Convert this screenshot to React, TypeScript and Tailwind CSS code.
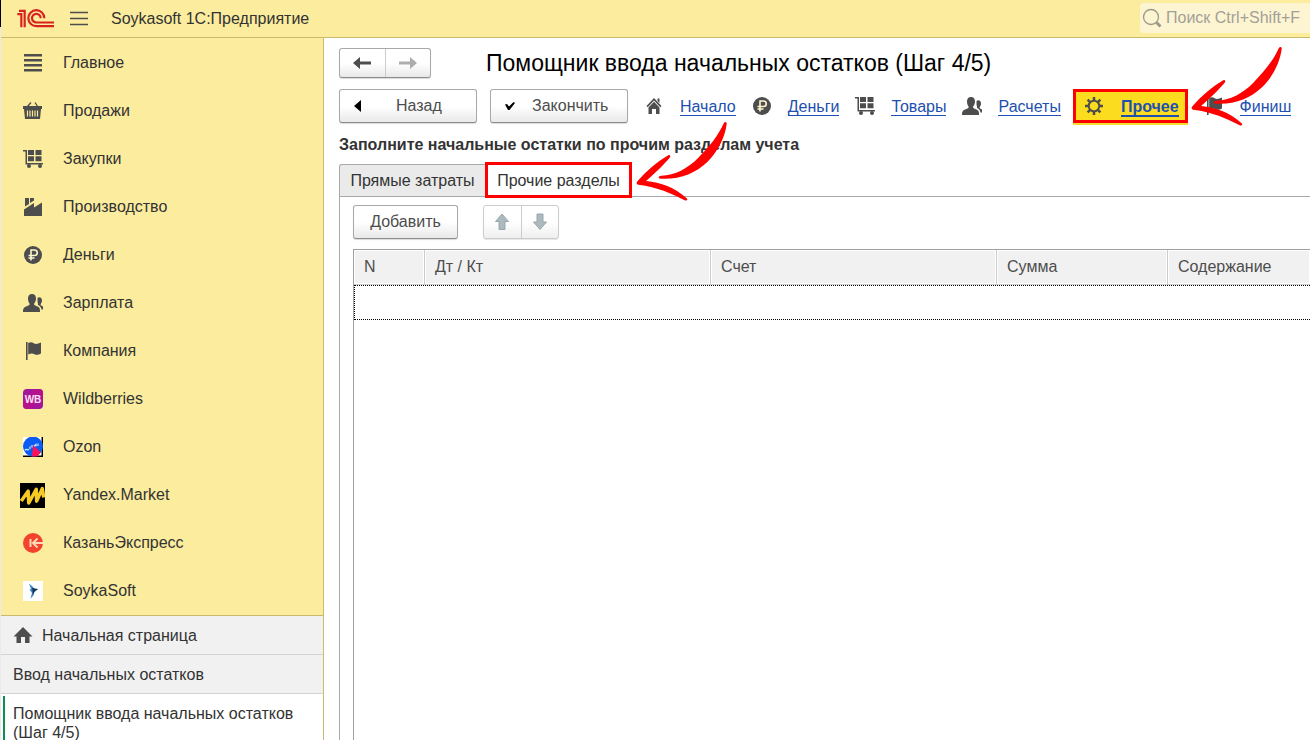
import type { ReactNode } from 'react'

const steelButton =
  'border border-[#a9a9a9] border-b-[#8c8c8c] bg-linear-to-b from-white from-50% to-[#e9e9e9] shadow-[0_1px_1px_rgba(0,0,0,0.15)] rounded-[3px]'

function Icon({ children, className = 'size-5' }: { children: ReactNode; className?: string }) {
  return (
    <svg viewBox="0 0 20 20" className={`shrink-0 fill-[#4d4d4d] ${className}`} aria-hidden="true">
      {children}
    </svg>
  )
}

function LinesIcon() {
  return (
    <Icon>
      <path d="M1 1h18v2.5H1zM1 6h18v2.5H1zM1 11h18v2.5H1zM1 16h18v2.5H1z" />
    </Icon>
  )
}

function BasketIcon() {
  return (
    <Icon>
      <path d="M4 6 8 1.500M15 6 12 1.500" stroke="#4d4d4d" strokeWidth="1.3" fill="none" />
      <path d="M0 5h19v3h-1l-1 10H2L1 8H0z" />
      <path d="M4.500 9.500v6M7 9.500v6M9.500 9.500v6M12 9.500v6M14.500 9.500v6" stroke="#fbec9e" strokeWidth="1.2" />
    </Icon>
  )
}

function CartIcon() {
  return (
    <Icon>
      <path d="M0 1h4v13h16v1.500H2.500V2.500H0z" />
      <path d="M5 1h6v5H5zM12.500 1h6v5h-6zM5 7.300h6v5H5zM12.500 7.300h6v5h-6z" />
      <circle cx="6" cy="17" r="2" />
      <circle cx="17" cy="17" r="2" />
    </Icon>
  )
}

function FactoryIcon() {
  return (
    <Icon>
      <path d="M1 19V12.500L11 6v4.500L19 5.500V19z" />
      <path d="M2 1h4v6L2 9.500zM7 1h4v2.500L7 6z" />
    </Icon>
  )
}

function RubleIcon() {
  return (
    <Icon>
      <circle cx="10" cy="10" r="9" />
      <path d="M8 15.500V5h3.500a2.700 2.700 0 0 1 0 5.500H5.500M5.500 13h6" fill="none" stroke="#fff6cf" strokeWidth="1.6" />
    </Icon>
  )
}

function PeopleIcon() {
  return (
    <Icon className="size-5 overflow-visible">
      <path d="M9 1c2.800 0 4 1.800 4 4.500 0 2-.8 3.800-1.800 4.800v1.700l4.300 2c1.300.7 1.500 2 1.500 5H0c0-3 .5-4.300 2-5l4.500-2v-1.700C5.500 9.300 5 7.500 5 5.500 5 2.800 6.200 1 9 1z" />
      <path d="M14.500 5c1-1.500 4.500-1.200 4.500 2.500 0 1.500-.6 2.800-1.300 3.500v1.200l2.300 1.300v3h-1.500c-.3-2.500-1.500-3.500-3.500-4.500v-1.500c-.8-1.300-.3-3.800-.5-5.500z" />
    </Icon>
  )
}

function FlagIcon() {
  return (
    <Icon>
      <path d="M3 1h1.600v18H3z" />
      <path d="M5.200 2c2-1 4-.8 5.500.2s4 1 7.300-.7v11c-2.500 1.500-5 1.500-6.500.7s-4-1-6.300.3z" />
    </Icon>
  )
}

function HomeIcon() {
  return (
    <Icon>
      <path d="M10 1 0.500 10.500H3.500V17H8v-6h4v6h4.500v-6.500h3z" />
    </Icon>
  )
}

function HouseIcon() {
  return (
    <Icon>
      <path d="m10 2 7.500 8-1.200 1.200L10 4.600l-6.300 6.600L2.500 10z" />
      <path d="m10 5.800 5.500 5.600V18H12v-5H8v5H4.500v-6.600zM13.500 2.500h2V7l-2-2z" />
    </Icon>
  )
}

function GearIcon() {
  return (
    <Icon>
      <g stroke="#4d4d4d" fill="none">
        <circle cx="10" cy="10" r="5.300" strokeWidth="2" />
        <path d="M10 1v4M10 15v4M1 10h4M15 10h4M3.600 3.600l2.800 2.800M13.600 13.600l2.800 2.800M16.400 3.600l-2.800 2.800M6.400 13.600l-2.800 2.800" strokeWidth="2.500" />
      </g>
    </Icon>
  )
}

function WildberriesIcon() {
  return (
    <Icon>
      <rect width="20" height="20" rx="4" fill="#a3189b" />
      <path d="M0 14 12 0h4a4 4 0 0 1 4 4v3L7 20H4a4 4 0 0 1-4-4z" fill="#b6128e" />
      <text x="10" y="13.500" textAnchor="middle" fontSize="10" fontWeight="700" fill="#fbe0f6">WB</text>
    </Icon>
  )
}

function OzonIcon() {
  return (
    <Icon>
      <path d="M0 0h20v20H0z" fill="#fff" />
      <path d="M20 0v20H0v-1.500h18.500V0z" fill="#000" />
      <circle cx="10" cy="9.500" r="10" fill="#0a5cf5" />
      <path d="m10 8.500 2 1.500 5.500 5-2 3-1 1.500H8.500l1-5z" fill="#fb1159" />
      <path d="M2 13.500c1.500-3 3 1 4-1.500M7 12V9.500M9 10.500V8M11 9l2-1.500v2M15 9V6.500" stroke="#d7e6ff" strokeWidth="1.200" fill="none" />
    </Icon>
  )
}

function YandexMarketIcon() {
  return (
    <Icon className="size-[25px]">
      <path d="M0 0h20v20H0z" fill="#000" />
      <path d="M1 14.500 6.500 6.500 7 16 13 5l.3 9.500L17.800 4.500l1.200 7" fill="none" stroke="#f5ca25" strokeWidth="2.800" strokeLinejoin="round" />
    </Icon>
  )
}

function KazanExpressIcon() {
  return (
    <Icon>
      <circle cx="10" cy="10" r="10" fill="#f4432d" />
      <path d="M7.500 6v8M20 10H10M14.500 5.500 10 10l4.500 4.500" fill="none" stroke="#ffd9b8" strokeWidth="2" />
    </Icon>
  )
}

function SoykaIcon() {
  return (
    <Icon>
      <path d="M0 0h20v20H0z" fill="#fff" />
      <path d="m6 2.500 3.500 3L12 8h3l-4 3.500-1 3.500-2.500 2.500L9 12 6.500 8.500 8 8z" fill="#3d86bd" />
      <path d="m9 7 6 1-3.500 2.500L10 14.500 9.500 10z" fill="#17365d" />
    </Icon>
  )
}

function Logo() {
  return (
    <svg viewBox="50 26 114 56" className="h-[19px] w-[38px]" role="img" aria-label="1С">
      <g fill="none" stroke="#d9211f" strokeWidth="6.500">
        <path d="M51 41h12v39M56 31h17v49" />
        <path d="M132 53A24 24 0 1 0 109 77H161" />
        <path d="M121 53A13 13 0 1 0 109 66H161" />
      </g>
    </svg>
  )
}

// Hand-drawn pointer that hangs off the highlighted control
function Pointer({ className }: { className: string }) {
  return (
    <svg viewBox="17 124 273 240" className={`pointer-events-none absolute z-10 h-20 w-[91px] max-w-none fill-[#fe0000] ${className}`} aria-hidden="true">
      <path d="M281 129C284 125 290 126 289 133C284 172 264 214 231 247C194 282 148 300 92 297C82 296 83 289 93 288C134 286 172 267 204 234C239 198 262 170 281 129Z" />
      <path d="M114 227C119 224 122 230 118 234C95 261 74 280 47 304C92 309 132 323 168 355C174 360 170 364 163 362C122 341 82 322 24 315C18 314 17 309 22 304C52 271 77 249 114 227Z" />
    </svg>
  )
}

const sections = [
  { title: 'Главное', icon: <LinesIcon /> },
  { title: 'Продажи', icon: <BasketIcon /> },
  { title: 'Закупки', icon: <CartIcon /> },
  { title: 'Производство', icon: <FactoryIcon /> },
  { title: 'Деньги', icon: <RubleIcon /> },
  { title: 'Зарплата', icon: <PeopleIcon /> },
  { title: 'Компания', icon: <FlagIcon /> },
  { title: 'Wildberries', icon: <WildberriesIcon /> },
  { title: 'Ozon', icon: <OzonIcon /> },
  { title: 'Yandex.Market', icon: <YandexMarketIcon /> },
  { title: 'КазаньЭкспресс', icon: <KazanExpressIcon /> },
  { title: 'SoykaSoft', icon: <SoykaIcon /> },
]

const steps = [
  { title: 'Начало', icon: <HouseIcon /> },
  { title: 'Деньги', icon: <RubleIcon /> },
  { title: 'Товары', icon: <CartIcon /> },
  { title: 'Расчеты', icon: <PeopleIcon /> },
  { title: 'Прочее', icon: <GearIcon />, current: true },
  { title: 'Финиш', icon: <FlagIcon /> },
]

const columns = [
  { title: 'N', width: 'w-[71px]' },
  { title: 'Дт / Кт', width: 'w-[286px]' },
  { title: 'Счет', width: 'w-[286px]' },
  { title: 'Сумма', width: 'w-[171px]' },
  { title: 'Содержание', width: '' },
]

function Header() {
  return (
    <header className="flex h-[38px] shrink-0 items-center border-b border-[#c9bb6d] bg-[#fbec9e] pl-4">
      <Logo />
      <button type="button" aria-label="Меню" className="ml-[15px]">
        <svg viewBox="0 0 18 15" className="h-[15px] w-[18px]">
          <path d="M0 1.500h18M0 7.500h18M0 13.500h18" stroke="#4d4d4d" strokeWidth="1.300" />
        </svg>
      </button>
      <span className="ml-[23px]">Soykasoft 1С:Предприятие</span>
      <label className="mb-0.5 ml-auto flex h-[30px] w-[170px] items-center gap-1 rounded-l-sm bg-[#fdf5d1] pt-px pl-0.5">
        <svg viewBox="0 0 20 20" className="size-5 shrink-0" fill="none" stroke="#9c998a">
          <circle cx="9" cy="9" r="7.500" strokeWidth="1.300" />
          <path d="m14.500 14.500 4 4" strokeWidth="3" />
        </svg>
        <input type="text" aria-label="Поиск" placeholder="Поиск Ctrl+Shift+F" className="w-full min-w-0 outline-none placeholder:text-[#a3a098]" />
      </label>
    </header>
  )
}

function Sidebar() {
  return (
    <aside className="flex w-[323px] shrink-0 flex-col border-r border-[#c9bb6d]">
      <nav className="border-b border-[#c9bb6d] bg-[#fbec9e] pt-px">
        {sections.map((section) => (
          <a key={section.title} href="#" className="flex h-12 items-center gap-[18px] pl-[19px]">
            <span className="flex w-[25px] justify-center">{section.icon}</span>
            {section.title}
          </a>
        ))}
      </nav>
      <a href="#" className="flex h-[39px] shrink-0 items-center gap-[9px] border-b border-[#d3d3d3] bg-[#f1f1f1] pt-px pl-3">
        <HomeIcon />
        Начальная страница
      </a>
      <a href="#" className="flex h-[39px] shrink-0 items-center border-b border-[#d3d3d3] bg-[#f1f1f1] pt-px pl-3">
        Ввод начальных остатков
      </a>
      <a href="#" className="mt-0.5 ml-0.5 grow border-l-2 border-[#0a9150] pt-2 pr-6 pl-2 leading-[19px]">
        Помощник ввода начальных остатков (Шаг 4/5)
      </a>
    </aside>
  )
}

function StepNav() {
  return (
    <nav className="flex items-center">
      {steps.map((step) =>
        step.current ? (
          <a
            key={step.title}
            href="#"
            aria-current="step"
            className="relative ml-3 flex h-[34px] items-center gap-[17px] border-3 border-[#fe0000] bg-[#fbdc1f] pr-1.5 pl-2 font-bold text-[#1d50b0] shadow-[0_2px_0_#f7dc30]"
          >
            {step.icon}
            <span className="border-b-2 border-[#1d50b0] pt-1 leading-4">{step.title}</span>
            <Pointer className="-top-[46px] left-full ml-1.5" />
          </a>
        ) : (
          <a key={step.title} href="#" className="ml-4 flex items-center gap-4 text-[#1d50b0]">
            {step.icon}
            <span className="border-b border-[#1d50b0] pt-0.5 leading-4">{step.title}</span>
          </a>
        ),
      )}
    </nav>
  )
}

export default function App() {
  return (
    <div className="flex h-screen overflow-hidden bg-white font-['Liberation_Sans',Arial,sans-serif] text-base text-[#333]">
      <div className="w-px shrink-0 bg-[#eaeaea]">
        <div className="h-[27px] bg-black" />
      </div>
      <div className="flex min-w-0 grow flex-col">
        <Header />
        <div className="flex min-h-0 grow">
          <Sidebar />
          <main className="flex min-w-0 grow flex-col pt-2.5 pl-[15px] whitespace-nowrap">
            <div className="flex h-[30px] items-center">
              <div className={`flex h-[30px] w-[92px] ${steelButton}`}>
                <button type="button" aria-label="Назад по истории" className="flex flex-1 items-center justify-center border-r border-[#ccc]">
                  <svg viewBox="0 0 18 14" className="h-3.5 w-[18px] fill-[#4d4d4d]">
                    <path d="M0 7 7 1v4.500h11v3H7V13z" />
                  </svg>
                </button>
                <button type="button" aria-label="Вперед по истории" className="flex flex-1 items-center justify-center">
                  <svg viewBox="0 0 18 14" className="h-3.5 w-[18px] fill-[#adadad]">
                    <path d="m18 7-7-6v4.500H0v3h11V13z" />
                  </svg>
                </button>
              </div>
              <h1 className="ml-[55px] text-[23px] text-black">Помощник ввода начальных остатков (Шаг 4/5)</h1>
            </div>

            <div className="mt-[11px] flex h-[34px] items-center">
              <button type="button" className={`flex h-[34px] w-[138px] shrink-0 items-center pl-3.5 text-[#4d4d4d] ${steelButton}`}>
                <svg viewBox="0 0 7 12" className="h-3 w-[7px] fill-black">
                  <path d="M7 0v12L0 6z" />
                </svg>
                <span className="ml-[35px]">Назад</span>
              </button>
              <button type="button" className={`ml-[13px] flex h-[34px] w-[138px] shrink-0 items-center pl-3.5 text-[#4d4d4d] ${steelButton}`}>
                <svg viewBox="0 0 10 10" className="size-2.5 fill-black">
                  <path d="M0 3.500 2 3l2 2.500L8.500 1 10 2 4.500 9H3z" />
                </svg>
                <span className="ml-[17px]">Закончить</span>
              </button>
              <StepNav />
            </div>

            <h2 className="mt-2.5 font-bold">Заполните начальные остатки по прочим разделам учета</h2>

            <div role="tablist" className="mt-[7px] flex h-8 items-center">
              <button type="button" role="tab" aria-selected="false" className="h-8 w-[146px] rounded-tl-[3px] border-t border-l border-[#a9a9a9] bg-[#eaeaea]">
                Прямые затраты
              </button>
              <div className="relative z-10">
                <button type="button" role="tab" aria-selected="true" className="block h-9 w-[147px] border-3 border-[#fe0000] bg-white pt-0.5">
                  Прочие разделы
                </button>
                <Pointer className="-top-[41px] left-full ml-1" />
              </div>
            </div>

            <section className="flex min-h-0 grow flex-col border-t border-l border-[#a9a9a9] pt-2 pl-[13px]">
              <div className="flex gap-[25px]">
                <button type="button" className={`h-[34px] w-[105px] text-[#4d4d4d] ${steelButton}`}>
                  Добавить
                </button>
                <div className="flex h-[34px] w-[76px] rounded-[3px] border border-[#ccc] bg-linear-to-b from-white from-50% to-[#eee] shadow-[0_1px_1px_rgba(0,0,0,0.1)]">
                  <button type="button" disabled aria-label="Переместить вверх" className="flex flex-1 items-center justify-center border-r border-[#ccc]">
                    <svg viewBox="0 0 16 18" className="h-[18px] w-4 fill-[#acb9bf] stroke-[#98a7ae]">
                      <path d="m8 1 6.500 7.500H11V16.500H5v-8H1.500z" />
                    </svg>
                  </button>
                  <button type="button" disabled aria-label="Переместить вниз" className="flex flex-1 items-center justify-center">
                    <svg viewBox="0 0 16 18" className="h-[18px] w-4 fill-[#acb9bf] stroke-[#98a7ae]">
                      <path d="m8 16.500-6.500-7.500H5V1h6v8h3.500z" />
                    </svg>
                  </button>
                </div>
              </div>

              <div className="mt-2.5 min-h-0 grow border-t border-l border-[#a0a0a0]">
                <table className="w-full table-fixed border-separate border-spacing-0">
                  <thead>
                    <tr className="h-[35px]">
                      {columns.map((column) => (
                        <th
                          key={column.title}
                          className={`border-r border-b border-[#ccc] bg-[#f1f1f1] pl-2.5 text-left font-normal text-[#4d4d4d] shadow-[inset_0_0_0_1px_white] last:border-r-0 ${column.width}`}
                        >
                          {column.title}
                        </th>
                      ))}
                    </tr>
                  </thead>
                  <tbody>
                    <tr className="h-[35px]">
                      <td colSpan={5} className="border-y border-l border-dotted border-black" />
                    </tr>
                  </tbody>
                </table>
              </div>
            </section>
          </main>
        </div>
      </div>
    </div>
  )
}
